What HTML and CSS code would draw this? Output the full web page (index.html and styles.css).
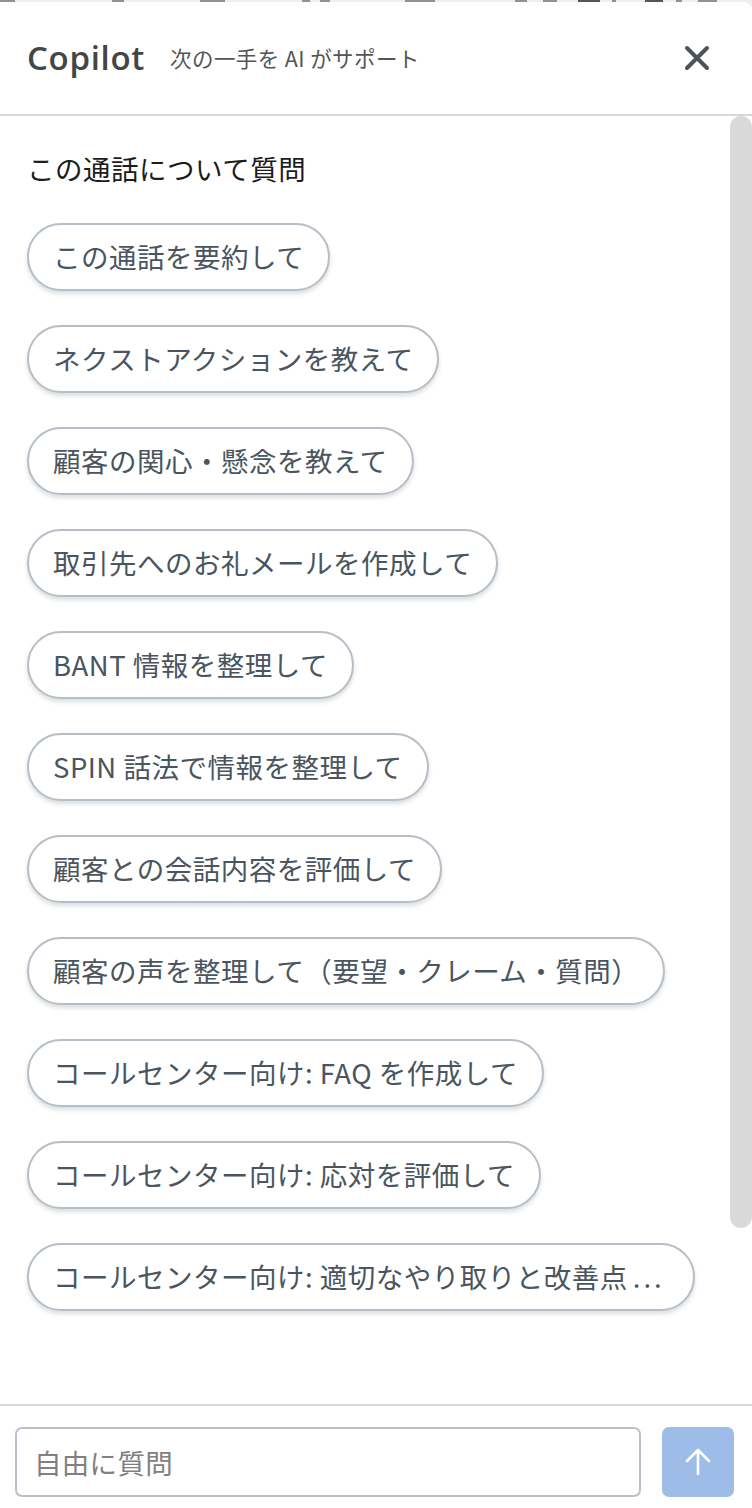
FILE: index.html
```html
<!DOCTYPE html>
<html lang="ja">
<head>
<meta charset="utf-8">
<title>Copilot</title>
<link rel="stylesheet" href="styles.css">
</head>
<body>
<div class="strip">
  <span class="mk" style="margin-left:0;width:15px"></span>
  <span class="mk" style="margin-left:97px;width:12px"></span>
  <span class="mk" style="margin-left:76px;width:25px"></span>
  <span class="mk" style="margin-left:77px;width:8px"></span>
  <span class="mk" style="margin-left:10px;width:10px"></span>
  <span class="mk" style="margin-left:75px;width:30px"></span>
  <span class="mk" style="margin-left:80px;width:12px"></span>
  <span class="mk" style="margin-left:16px;width:14px"></span>
  <span class="mk dk" style="margin-left:21px;width:22px"></span>
  <span class="mk" style="margin-left:12px;width:4px"></span>
  <span class="mk dk" style="margin-left:29px;width:18px"></span>
  <span class="mk" style="margin-left:13px;width:6px"></span>
  <span class="mk" style="margin-left:16px;width:19px"></span>
</div>
<div class="panel">
  <header class="header">
    <div class="brand">Copilot</div>
    <div class="tagline">次の一手を AI がサポート</div>
    <button class="close" aria-label="閉じる">
      <svg width="26" height="26" viewBox="0 0 26 26"><path d="M3 3 L23 23 M23 3 L3 23" stroke="#4b535b" stroke-width="4" stroke-linecap="round" fill="none"/></svg>
    </button>
  </header>
  <main class="content">
    <h2 class="title">この通話について質問</h2>
    <div class="chips">
      <button class="chip">この通話を要約して</button>
      <button class="chip">ネクストアクションを教えて</button>
      <button class="chip">顧客の関心・懸念を教えて</button>
      <button class="chip">取引先へのお礼メールを作成して</button>
      <button class="chip">BANT 情報を整理して</button>
      <button class="chip">SPIN 話法で情報を整理して</button>
      <button class="chip">顧客との会話内容を評価して</button>
      <button class="chip">顧客の声を整理して（要望・クレーム・質問）</button>
      <button class="chip">コールセンター向け: FAQ を作成して</button>
      <button class="chip">コールセンター向け: 応対を評価して</button>
      <button class="chip">コールセンター向け: 適切なやり取りと改善点<span class="dots">...</span></button>
    </div>
    <div class="thumb"></div>
  </main>
  <footer class="footer">
    <div class="input">自由に質問</div>
    <button class="send" aria-label="送信">
      <svg width="30" height="30" viewBox="0 0 30 30"><path d="M15 27 V3 M4 14 L15 3 L26 14" stroke="#ffffff" stroke-width="2.6" stroke-linecap="round" stroke-linejoin="round" fill="none"/></svg>
    </button>
  </footer>
</div>
</body>
</html>
```
FILE: styles.css
```css
* { box-sizing: border-box; }
html, body { margin: 0; padding: 0; }
body {
  background: #eeeeee;
  width: 752px;
  height: 1508px;
  overflow: hidden;
  font-family: "Noto Sans CJK JP", "Noto Sans", sans-serif;
}
.strip {
  height: 2px;
  display: flex;
  overflow: hidden;
}
.mk { display: block; height: 2px; background: #8c9297; flex: none; }
.mk.dk { background: #4f575c; }
.panel {
  background: #ffffff;
  height: 1506px;
  border-top-right-radius: 8px;
  display: flex;
  flex-direction: column;
}
.header {
  height: 114px;
  flex: none;
  border-bottom: 2px solid #d5d9dd;
  display: flex;
  align-items: center;
  padding: 0 0 0 27px;
}
.brand {
  font-family: "Open Sans", "Noto Sans", sans-serif;
  font-weight: 600;
  font-size: 33px;
  letter-spacing: 0.7px;
  color: #454545;
  line-height: 1;
  padding-bottom: 2px;
}
.tagline {
  margin-left: 25px;
  font-size: 21.5px;
  letter-spacing: 0.4px;
  color: #555555;
  line-height: 1;
}
.close {
  margin-left: auto;
  margin-right: 42px;
  background: none;
  border: 0;
  padding: 0;
  width: 26px;
  height: 26px;
  display: flex;
}
.content {
  flex: 1;
  position: relative;
  overflow: hidden;
  padding: 32px 0 0 27px;
}
.title {
  margin: 0 0 35px 0;
  font-size: 27.5px;
  letter-spacing: 0.5px;
  font-weight: 400;
  line-height: 40px;
  color: #1c1c1c;
}
.chips {
  display: flex;
  flex-direction: column;
  align-items: flex-start;
  gap: 34px;
}
.chip {
  height: 68px;
  border: 2px solid #b6bec7;
  border-radius: 34px;
  background: #ffffff;
  box-shadow: 0 3px 4px rgba(60, 70, 80, 0.18);
  padding: 0 24px;
  font-family: "Noto Sans CJK JP", "Noto Sans", sans-serif;
  font-size: 27.5px;
  letter-spacing: 0.5px;
  line-height: 1;
  color: #4a5560;
  white-space: nowrap;
  display: flex;
  align-items: center;
}
.dots {
  letter-spacing: 3px;
  margin-left: 5px;
  margin-right: 4px;
}
.thumb {
  position: absolute;
  top: 0;
  right: 0;
  width: 22px;
  height: 1112px;
  border-radius: 11px;
  background: #d9d9d9;
}
.footer {
  flex: none;
  height: 104px;
  border-top: 2px solid #d5d9dd;
  display: flex;
  padding: 21px 18px 11px 15px;
  gap: 21px;
}
.input {
  flex: 1;
  height: 70px;
  border: 2px solid #b9c0c7;
  border-radius: 7px;
  padding-left: 17px;
  display: flex;
  align-items: center;
  font-size: 27.5px;
  letter-spacing: 0.3px;
  color: #808080;
}
.send {
  width: 72px;
  height: 70px;
  border: 0;
  border-radius: 7px;
  background: #9dbde8;
  display: flex;
  align-items: center;
  justify-content: center;
  padding: 0;
}
```
